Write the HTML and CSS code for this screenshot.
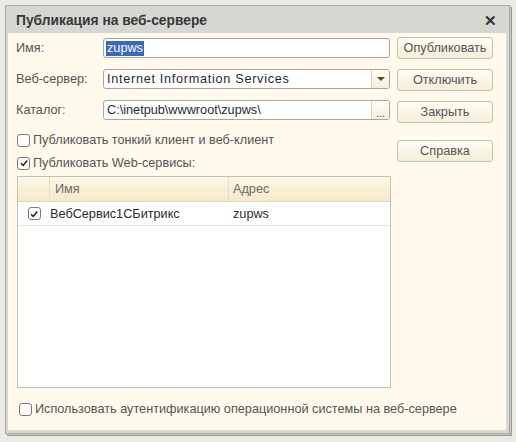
FILE: index.html
```html
<!DOCTYPE html>
<html lang="ru">
<head>
<meta charset="utf-8">
<title>Публикация на веб-сервере</title>
<link rel="stylesheet" href="styles.css">
</head>
<body>
<div class="window">
  <div class="titlebar">
    <span class="title">Публикация на веб-сервере</span>
    <span class="close">✕</span>
  </div>
  <div class="content">
    <div class="main">
      <div class="left">
        <div class="form">
          <label class="lbl">Имя:</label>
          <div class="field"><span class="sel">zupws</span></div>
          <label class="lbl">Веб-сервер:</label>
          <div class="field combo"><span class="val wide">Internet Information Services</span><span class="btn-in"><span class="tri"></span></span></div>
          <label class="lbl">Каталог:</label>
          <div class="field combo"><span class="val">C:\inetpub\wwwroot\zupws\</span><span class="btn-in dots">...</span></div>
        </div>
        <div class="check first"><span class="box"></span>Публиковать тонкий клиент и веб-клиент</div>
        <div class="check"><span class="box on"><svg viewBox="0 0 10 10" width="10" height="10"><path d="M2 5.2 L4.2 7.4 L8.2 2.6" fill="none" stroke="#222" stroke-width="1.6"/></svg></span>Публиковать Web-сервисы:</div>
      </div>
      <div class="buttons">
        <div class="button">Опубликовать</div>
        <div class="button">Отключить</div>
        <div class="button">Закрыть</div>
        <div class="button help">Справка</div>
      </div>
    </div>
    <div class="table">
      <div class="thead">
        <div class="c0"></div>
        <div class="c1">Имя</div>
        <div class="c2">Адрес</div>
      </div>
      <div class="trow">
        <div class="c0"><span class="box on"><svg viewBox="0 0 10 10" width="10" height="10"><path d="M2 5.2 L4.2 7.4 L8.2 2.6" fill="none" stroke="#222" stroke-width="1.6"/></svg></span></div>
        <div class="c1">ВебСервис1СБитрикс</div>
        <div class="c2">zupws</div>
      </div>
    </div>
    <div class="check last"><span class="box"></span>Использовать аутентификацию операционной системы на веб-сервере</div>
  </div>
</div>
</body>
</html>
```
FILE: styles.css
```css
html, body {
  margin: 0;
  padding: 0;
}
body {
  width: 516px;
  height: 442px;
  background: #ebebe3;
  font-family: "Liberation Sans", Arial, sans-serif;
  font-size: 12.7px;
  color: #555;
  overflow: hidden;
}
.window {
  box-sizing: border-box;
  margin: 5px 0 0 5px;
  width: 505px;
  height: 429px;
  border: 1px solid #a9a9a3;
  box-shadow: 1px 1px 0 #c9c9c3, 2px 2px 0 #9c9c96;
  background: #d8d8d4;
  padding: 2px 3px 3px 2px;
  display: flex;
  flex-direction: column;
}
.titlebar {
  height: 25px;
  background: #d6d6d3;
  display: flex;
  align-items: center;
  justify-content: space-between;
  padding: 0 9px 0 8px;
  flex: none;
}
.title {
  font-weight: bold;
  font-size: 13.8px;
  color: #383838;
}
.close {
  font-weight: bold;
  font-size: 15px;
  color: #333;
}
.content {
  flex: 1;
  background: #fffaec;
  padding: 4px 8px 0 8px;
  display: flex;
  flex-direction: column;
}
.main {
  display: flex;
  justify-content: space-between;
}
.left {
  width: 374px;
}
.form {
  display: grid;
  grid-template-columns: 87px 287px;
  grid-auto-rows: 20px;
  row-gap: 11px;
  align-items: center;
  margin-top: 1px;
}
.lbl {
  color: #555;
}
.field {
  box-sizing: border-box;
  height: 20px;
  border: 1px solid #a8a59a;
  border-radius: 3px;
  background: #fff;
  display: flex;
  align-items: center;
  padding-left: 2px;
  color: #2a2a2a;
}
.sel {
  background: #3a66c4;
  color: #fff;
  padding: 0 1px;
  line-height: 15px;
}
.combo {
  padding-right: 0;
}
.val {
  flex: 1;
  padding-left: 1px;
}
.val.wide {
  letter-spacing: 0.7px;
}
.btn-in {
  width: 17px;
  height: 18px;
  border-left: 1px solid #d6d2c4;
  display: flex;
  align-items: center;
  justify-content: center;
  background: linear-gradient(#fffdf6, #f3efe2);
  border-radius: 0 2px 2px 0;
}
.tri {
  width: 0;
  height: 0;
  border-left: 4px solid transparent;
  border-right: 4px solid transparent;
  border-top: 4px solid #5e4d1e;
}
.dots {
  font-size: 11px;
  color: #444;
  align-items: flex-end;
  line-height: 12px;
}
.check {
  display: flex;
  align-items: center;
  height: 16px;
  color: #555;
}
.check.first {
  margin-top: 12px;
}
.check + .check {
  margin-top: 7px;
}
.box {
  box-sizing: border-box;
  width: 13px;
  height: 13px;
  border: 1px solid #7e7b72;
  border-radius: 3px;
  background: #fff;
  margin: 0 3px 0 1px;
  display: inline-flex;
  align-items: center;
  justify-content: center;
  flex: none;
}
.buttons {
  width: 96px;
  display: flex;
  flex-direction: column;
  gap: 10px;
  margin-right: 5px;
}
.button {
  box-sizing: border-box;
  height: 22px;
  border: 1px solid #c9c1a6;
  border-radius: 3px;
  background: linear-gradient(#fffdf5, #f4eed9);
  display: flex;
  align-items: center;
  justify-content: center;
  color: #555;
}
.button.help {
  margin-top: 7px;
}
.table {
  box-sizing: border-box;
  margin-top: 5px;
  margin-left: 1px;
  width: 374px;
  height: 212px;
  border: 1px solid #c4c0b4;
  background: #fff;
  flex: none;
}
.thead, .trow {
  display: flex;
}
.thead {
  height: 24px;
  background: linear-gradient(#fdf7e6, #f5e9c9);
  border-bottom: 1px solid #e2d7b8;
  align-items: center;
}
.trow {
  height: 23px;
  border-bottom: 1px solid #e4e4e4;
  align-items: center;
  color: #2a2a2a;
}
.thead .c1, .thead .c2 {
  color: #6b6b6b;
}
.c0 {
  width: 32px;
  height: 100%;
  display: flex;
  align-items: center;
  justify-content: center;
  box-sizing: border-box;
}
.thead .c0 {
  border-right: 1px solid #e6dcc0;
}
.c1 {
  width: 179px;
  padding-left: 5px;
  box-sizing: border-box;
  height: 100%;
  display: flex;
  align-items: center;
}
.thead .c1 {
  border-right: 1px solid #e6dcc0;
}
.c2 {
  flex: 1;
  padding-left: 4px;
  height: 100%;
  display: flex;
  align-items: center;
}
.trow .c1 {
  padding-left: 0;
}
.trow .c0 .box {
  margin: 0;
}
.check.last {
  margin-top: 13px;
  margin-left: 2px;
}
```
